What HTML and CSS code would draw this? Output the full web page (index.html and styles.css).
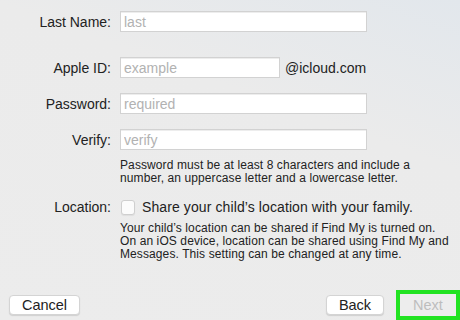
FILE: index.html
```html
<!DOCTYPE html>
<html lang="en">

<head>
    <meta charset="UTF-8">
    <meta name="viewport" content="width=device-width, initial-scale=1.0">
    <title>Child Account</title>
    <link rel="stylesheet" href="styles.css">
</head>

<body>
    <div class="sheet">
        <div class="form">
            <div class="row row-last">
                <label class="label">Last Name:</label>
                <input class="field field-wide" type="text" placeholder="last">
            </div>
            <div class="row row-id">
                <label class="label">Apple ID:</label>
                <div class="id-box">
                    <input class="field field-short" type="text" placeholder="example">
                    <span class="domain">@icloud.com</span>
                </div>
            </div>
            <div class="row row-pass">
                <label class="label">Password:</label>
                <input class="field field-wide" type="password" placeholder="required">
            </div>
            <div class="row row-pass">
                <label class="label">Verify:</label>
                <input class="field field-wide" type="password" placeholder="verify">
            </div>
            <div class="row row-note">
                <span></span>
                <p class="note">Password must be at least 8 characters and include a<br>number, an uppercase letter and a lowercase letter.</p>
            </div>
            <div class="row row-loc">
                <label class="label">Location:</label>
                <label class="check">
                    <span class="box"></span>
                    <span>Share your child’s location with your family.</span>
                </label>
            </div>
            <div class="row row-info">
                <span></span>
                <p class="note info">Your child’s location can be shared if Find My is turned on.<br>On an iOS device, location can be shared using Find My and<br>Messages. This setting can be changed at any time.</p>
            </div>
        </div>

        <div class="footer">
            <button class="btn">Cancel</button>
            <div class="nav">
                <button class="btn btn-back">Back</button>
                <button class="btn btn-next">Next</button>
            </div>
        </div>
    </div>
</body>

</html>
```

FILE: styles.css
```css
* {
    box-sizing: border-box;
}

body {
    margin: 0;
    font-family: "Liberation Sans", Arial, sans-serif;
    color: #222;
    background: linear-gradient(200deg, #e2e7ec 0%, #ebebeb 35%, #ececec 100%);
}

.sheet {
    display: flex;
    flex-direction: column;
    height: 320px;
    overflow: hidden;
}

.row {
    display: grid;
    grid-template-columns: 111px 1fr;
    column-gap: 9px;
    align-items: center;
}

.row-last {
    margin-top: 11px;
}

.row-id {
    margin-top: 25px;
}

.row-pass {
    margin-top: 15px;
}

.row-note {
    margin-top: 9px;
}

.row-loc {
    margin-top: 15px;
}

.row-info {
    margin-top: 7px;
}

.label {
    text-align: right;
    font-size: 14px;
    color: #222;
}

.field {
    height: 21px;
    padding: 0 3px;
    border: 1px solid #d2d2d2;
    background: #fff;
    font: 14px "Liberation Sans", Arial, sans-serif;
    color: #222;
    outline: none;
    box-shadow: inset 0 1px 0 #ededed;
}

.field::placeholder {
    color: #b2b2b2;
}

.field-wide {
    width: 247px;
}

.id-box {
    display: flex;
    align-items: center;
    gap: 5px;
}

.field-short {
    width: 160px;
}

.domain {
    font-size: 14px;
}

.note {
    margin: 0;
    font-size: 12px;
    letter-spacing: .1px;
    line-height: 12.5px;
    color: #222;
    white-space: nowrap;
}

.info {
    line-height: 13px;
}

.check {
    display: flex;
    align-items: center;
    gap: 7px;
    font-size: 14px;
    letter-spacing: .1px;
    padding-left: 1px;
}

.box {
    width: 14px;
    height: 15px;
    border: 1px solid #cfcfcf;
    border-radius: 3px;
    background: #fbfbfb;
    box-shadow: 0 1px 1px rgba(0, 0, 0, .06);
}

.footer {
    margin-top: auto;
    height: 30px;
    display: flex;
    align-items: center;
    justify-content: space-between;
    padding-left: 9px;
}

.nav {
    display: flex;
    align-items: center;
    gap: 12px;
}

.btn {
    height: 20px;
    padding: 0;
    border: 1px solid #d4d4d4;
    border-radius: 4px;
    background: #fff;
    font: 14.5px "Liberation Sans", Arial, sans-serif;
    color: #222;
    box-shadow: 0 1px 1px rgba(0, 0, 0, .12);
    width: 71px;
}

.btn-back {
    width: 58px;
}

.btn-next {
    width: 64px;
    height: 30px;
    border: 4px solid #22e322;
    border-radius: 0;
    background: #ededed;
    color: #bdbdbd;
    box-shadow: none;
}
```
